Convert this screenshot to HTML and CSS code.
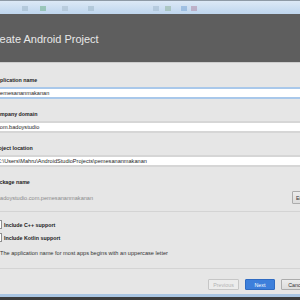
FILE: index.html
```html
<!DOCTYPE html>
<html lang="en">
  <head>
    <meta charset="UTF-8" />
    <meta name="viewport" content="width=device-width, initial-scale=1.0" />
    <title>Create Android Project</title>
    <link rel="stylesheet" href="styles.css">
  </head>
  <body>
    <div class="toolbar">
      <span class="tb-icon" style="left: 22px; background: #9fb7c9"></span>
      <span class="tb-icon" style="left: 40px; background: #6fb08a"></span>
      <span class="tb-icon" style="left: 62px; background: #a7bccc"></span>
      <span class="tb-icon" style="left: 88px; background: #9db6c6"></span>
      <span class="tb-icon" style="left: 153px; background: #a2bace"></span>
      <span class="tb-icon" style="left: 165px; background: #8fb39c"></span>
      <span class="tb-icon" style="left: 181px; background: #7aa6d6"></span>
      <span class="tb-icon" style="left: 191px; background: #b08aa6"></span>
    </div>

    <div class="header">
      <h1>Create Android Project</h1>
    </div>

    <div class="form">
      <div class="group">
        <label>Application name</label>
        <div class="field focused">pemesananmakanan</div>
      </div>
      <div class="group">
        <label>Company domain</label>
        <div class="field">com.badoystudio</div>
      </div>
      <div class="group">
        <label>Project location</label>
        <div class="field">C:\Users\Mahru\AndroidStudioProjects\pemesananmakanan</div>
      </div>
      <div class="group">
        <label>Package name</label>
        <div class="package-row">
          <span class="package">badoystudio.com.pemesananmakanan</span>
          <button class="btn edit">Edit</button>
        </div>
      </div>

      <div class="separator sep-top"></div>

      <div class="check-row first">
        <span class="checkbox"></span>
        <span>Include C++ support</span>
      </div>
      <div class="check-row">
        <span class="checkbox"></span>
        <span>Include Kotlin support</span>
      </div>

      <p class="hint">The application name for most apps begins with an uppercase letter</p>

      <div class="separator sep-bottom"></div>

      <div class="buttons">
        <button class="btn disabled">Previous</button>
        <button class="btn primary">Next</button>
        <button class="btn">Cancel</button>
      </div>
    </div>

    <div class="footer"></div>
  </body>
</html>
```

FILE: styles.css
```css
html,
body {
  margin: 0;
  padding: 0;
  width: 300px;
  height: 300px;
  overflow: hidden;
}
body {
  font-family: "Liberation Sans", Arial, sans-serif;
  background-color: #e6e6e6;
  color: #222;
}
.toolbar {
  position: relative;
  height: 13px;
  border-top: 1px solid #8e9aa6;
  background: linear-gradient(#dce9f6, #bfd6ee);
}
.tb-icon {
  position: absolute;
  top: 5px;
  width: 6px;
  height: 5px;
  opacity: 0.55;
}
.header {
  height: 48px;
  background-color: #5e5e5e;
  border-bottom: 1px solid #cdcdcd;
  display: flex;
  align-items: center;
}
.header h1 {
  margin: 2px 0 0 -12px;
  font-size: 11px;
  font-weight: normal;
  color: #e8e8e8;
}
.form {
  margin-left: -7px;
  width: 322px;
  padding-top: 13px;
  font-size: 5.6px;
}
.group {
  margin-bottom: 11px;
}
.group label {
  display: block;
  height: 8px;
  line-height: 8px;
  margin-bottom: 3px;
  font-weight: bold;
  font-size: 5.3px;
  color: #1c1c1c;
}
.field {
  box-sizing: border-box;
  height: 12px;
  line-height: 8px;
  padding: 0 4px;
  background: #fff;
  border-top: 2px solid #d6d6d6;
  border-bottom: 2px solid #d6d6d6;
  color: #1e1e1e;
}
.field.focused {
  border-color: #a9c8ea;
}
.package-row {
  margin-top: 5px;
  height: 13px;
  display: flex;
  align-items: center;
}
.package {
  padding-left: 4px;
  color: #8a8a8a;
}
.btn {
  box-sizing: border-box;
  height: 11px;
  width: 31px;
  padding: 0;
  font-family: inherit;
  font-size: 5.3px;
  color: #333;
  background: linear-gradient(#ececec, #dcdcdc);
  border: 1px solid #acacac;
  border-radius: 1px;
}
.btn.edit {
  margin-left: auto;
  width: 23px;
  height: 13px;
  text-align: left;
  padding-left: 3px;
}
.separator {
  height: 1px;
  background: #d4d4d4;
}
.sep-top {
  margin-top: -4px;
}
.check-row {
  height: 13px;
  display: flex;
  align-items: center;
  gap: 2px;
  font-weight: bold;
  font-size: 5.3px;
  color: #222;
}
.check-row.first {
  margin-top: 6px;
}
.checkbox {
  box-sizing: border-box;
  width: 9px;
  height: 9px;
  background: #fff;
  border: 1px solid #8f8f8f;
}
.hint {
  margin: 5px 0 0;
  padding-left: 7px;
  height: 8px;
  line-height: 8px;
  color: #333;
}
.sep-bottom {
  margin-top: 11px;
}
.buttons {
  margin-top: 10px;
  display: flex;
  justify-content: flex-end;
  gap: 6px;
  padding-right: 3px;
}
.btn.primary {
  width: 30px;
  background: #3d7fdb;
  border-color: #2f6bc2;
  color: #fff;
}
.btn.disabled {
  background: #ececec;
  border-color: #c6c6c6;
  color: #b4b4b4;
}
.footer {
  margin-top: 4px;
  height: 10px;
  border-top: 3px solid #a9c5e2;
  background: #3c3c3c;
}
```
